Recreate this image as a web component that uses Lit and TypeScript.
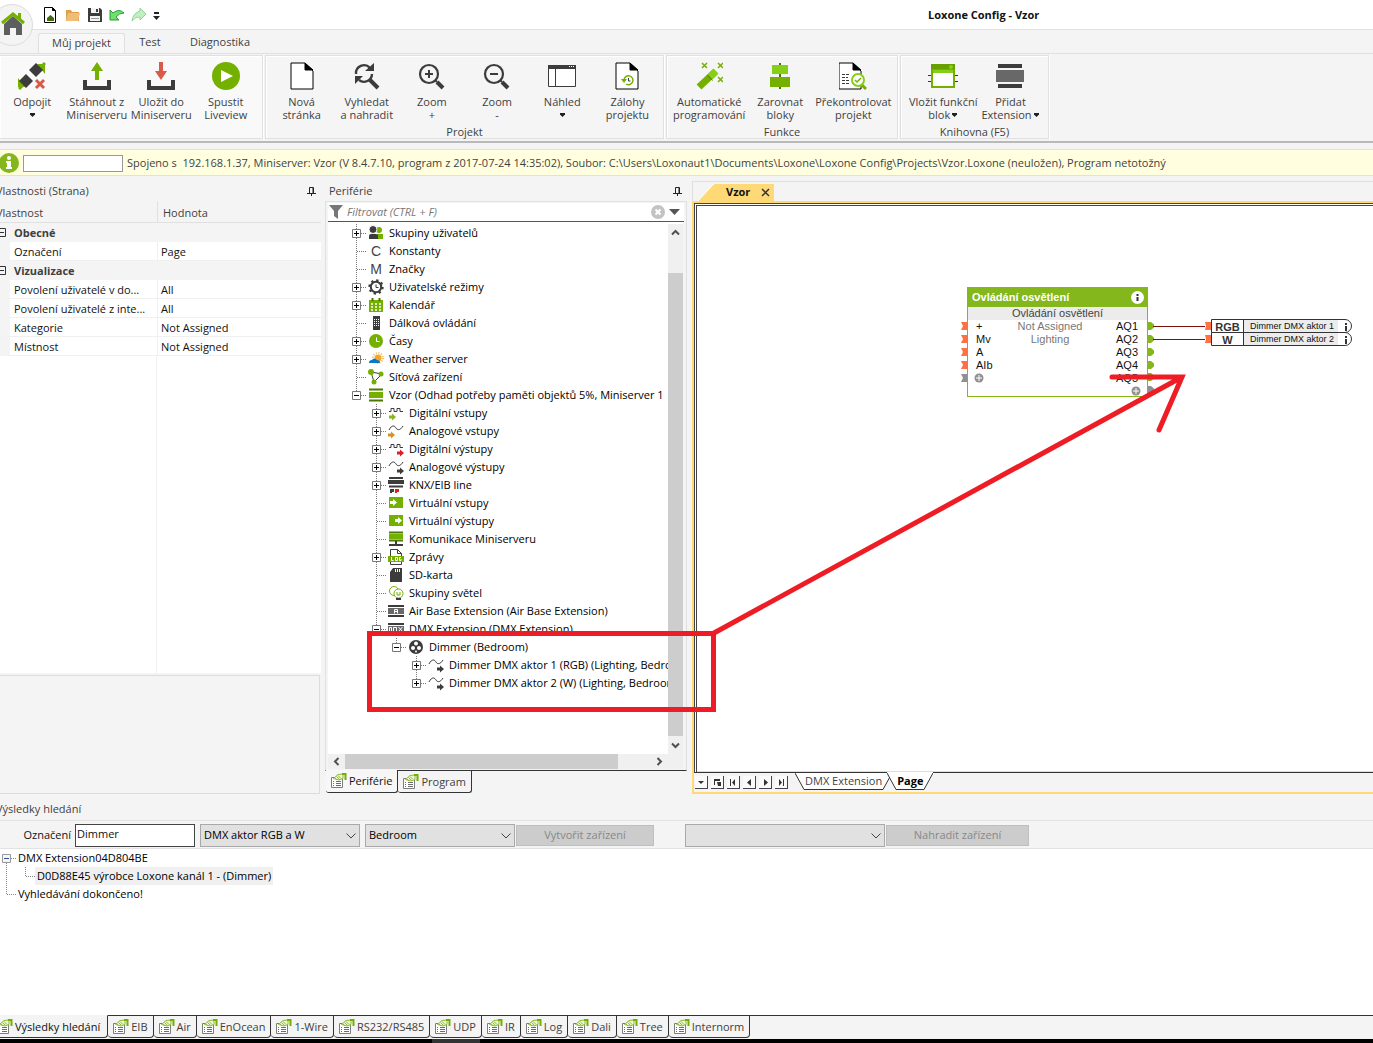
import { LitElement, html, svg, css, nothing, TemplateResult } from "lit";
import { customElement } from "lit/decorators.js";
import { classMap } from "lit/directives/class-map.js";

const DARK = "#3c3c3c";
const GREEN = "#74b000";
const LIME = "#85d016";

const icon = (w: number, h: number, body: unknown) =>
  html`<svg width=${w} height=${h} viewBox="0 0 ${w} ${h}" fill="none" aria-hidden="true">${body}</svg>`;

const sheet = svg`<path d="M1 1h14l8 8v18h-22z" transform="translate(2 0)" fill="#fff" stroke="#000"/><path d="M17 1v7h8z" fill="#000" stroke="#000"/>`;
const lens = svg`<circle cx="11" cy="12" r="9" stroke="${DARK}" stroke-width="2.2"/><path d="M17 18l2 2" stroke="${DARK}" stroke-width="2"/><path d="M19 20l6 6" stroke="${DARK}" stroke-width="4"/>`;

const big: Record<string, TemplateResult> = {
  unplug: icon(28, 28, svg`<path d="M1 27l5-5M22 6l5-5" stroke="${GREEN}" stroke-width="3"/><path d="M0 16v9l7 0zM27 12V2h-8z" fill="${GREEN}"/><path d="M12 8l7-7 7 7-7 7z" fill="${DARK}" transform="translate(-1 0)"/><path d="M1 19l7-7 7 7-7 7z" fill="${DARK}"/><path d="M8 10l-2-2M13 22l2 2" stroke="#fff"/><path d="M18 18l8 8m0-8l-8 8" stroke="#da5a49" stroke-width="3"/>`),
  download: icon(28, 28, svg`<path d="M2 18v8h24v-8" stroke="${DARK}" stroke-width="4"/><path d="M14 0l6 9h-4v9h-4V9H8z" fill="${GREEN}"/>`),
  upload: icon(28, 28, svg`<path d="M2 18v8h24v-8" stroke="${DARK}" stroke-width="4"/><path d="M14 18l6-9h-4V0h-4v9H8z" fill="#da5a49"/>`),
  play: icon(28, 28, svg`<circle cx="14" cy="14" r="14" fill="${GREEN}"/><path d="M9 8l12 6-12 6z" fill="#fff"/>`),
  page: icon(28, 28, sheet),
  replace: icon(28, 28, svg`<path d="M3 12a8 8 0 0 1 14-6M19 12a8 8 0 0 1-13 6" stroke="${DARK}" stroke-width="2.4"/><path d="M12 9h9V1zM2 14h8l-8 8z" fill="${DARK}"/><path d="M16 17l9 9" stroke="${DARK}" stroke-width="4"/>`),
  zoomIn: icon(28, 28, svg`${lens}<path d="M7 12h8M11 8v8" stroke="${DARK}" stroke-width="2"/>`),
  zoomOut: icon(28, 28, svg`${lens}<path d="M7 12h8" stroke="${DARK}" stroke-width="2"/>`),
  view: icon(28, 28, svg`<path d="M.5 3.500h27v21H.5z" fill="#fff" stroke="${DARK}"/><path d="M0 3h28v4H0z" fill="${DARK}"/><path d="M7.500 7v17" stroke="${DARK}"/><path d="M21 4.500h6" stroke="#fff" stroke-dasharray="1 1"/>`),
  backup: icon(28, 28, svg`${sheet}<path d="M11 18a4.500 4.500 0 1 1 2 4" stroke="${GREEN}" stroke-width="1.500"/><path d="M8 17h6l-3 4z" fill="${GREEN}"/><path d="M15.500 16v3h2" stroke="${DARK}"/>`),
  wand: icon(28, 28, svg`<path d="M4 25L20 10" stroke="${GREEN}" stroke-width="7"/><path d="M15 15l6-6" stroke="${LIME}" stroke-width="7"/><path d="M12.500 13l5 5.500" stroke="#4d7800"/><path d="M7 1l5 5m0-5L7 6M23 1l5 5m0-5l-5 5M23 15l5 5m0-5l-5 5" stroke="${GREEN}" stroke-width="1.500"/>`),
  align: icon(28, 28, svg`<path d="M14 1v26" stroke="#4d7800" stroke-width="2"/><path d="M6 3h16v9H6z" fill="${LIME}"/><path d="M4 15h20v10H4z" fill="${GREEN}"/>`),
  check: icon(28, 28, svg`<g transform="translate(-3 0)">${sheet}</g><path d="M3 12.500h8M3 15.500h6M3 18.500h7M3 21.500h8" stroke="${DARK}" stroke-dasharray="3 1"/><path d="M23 23l4 4" stroke="${GREEN}" stroke-width="3"/><circle cx="19" cy="18" r="6" fill="#fff" stroke="${LIME}" stroke-width="2"/><path d="M16 18l2 2 4-4" stroke="${GREEN}" stroke-width="1.500"/>`),
  block: icon(30, 28, svg`<path d="M0 13.500h30M0 19.500h30" stroke="#2c4400"/><path d="M3 2h24v24H3z" fill="${GREEN}"/><path d="M3 2h24v5H3z" fill="#67a000"/><path d="M5 8h20v3H5z" fill="${LIME}"/><path d="M5 11h20v13H5z" fill="#fff"/><circle cx="23" cy="5" r="2" fill="${LIME}"/>`),
  extension: icon(28, 28, svg`<path d="M2 2h24v4H2zM2 22h24v4H2z" fill="${DARK}"/><path d="M0 8h28v12H0z" fill="#686868"/>`),
};

const sq = "M1 4.500h2v-3h3v3h3v-3h3v3h3";
const wave = "M1 6c3-6 6-4 7-2s4 3 7-2";
const arrow = (x: number, y: number, c: string) => svg`<path d="M${x} ${y - 1.500}h3v-2l4 3.500-4 3.500v-2h-3z" fill="${c}"/>`;
const rails = svg`<path d="M0 3h16M0 13h16" stroke="${DARK}" stroke-width="2"/><path d="M0 5h16v6H0z" fill="#686868"/>`;
const small: Record<string, TemplateResult> = {
  users: icon(16, 16, svg`<circle cx="11" cy="5" r="3" fill="${GREEN}"/><path d="M9 9h6v5H9z" fill="${GREEN}"/><circle cx="5" cy="4.500" r="4" fill="${DARK}" stroke="#fff"/><path d="M1 14v-3q0-2 2-2h5q2 0 2 2v3z" fill="${DARK}"/>`),
  gear: icon(16, 16, svg`<circle cx="8" cy="8" r="5.200" stroke="${DARK}" stroke-width="2"/><circle cx="8" cy="8" r="6.700" stroke="${DARK}" stroke-width="2" stroke-dasharray="2.300 2.960"/><path d="M8 5.500V8.500h2.500" stroke="${DARK}"/>`),
  calendar: icon(16, 16, svg`<path d="M1 3h14v12H1z" fill="${GREEN}"/><path d="M4.500 1v3M11.500 1v3" stroke="#4d7800" stroke-width="2"/><path d="M3 7h10M3 10h10M3 13h10" stroke="#fff" stroke-width="1.500" stroke-dasharray="2 2"/>`),
  remote: icon(16, 16, svg`<path d="M5 1h7v14H5z" fill="${DARK}"/><path d="M6 4.500h5M6 6.500h5M6 8.500h5M6 10.500h5" stroke="#fff" stroke-dasharray="1 1"/>`),
  clock: icon(16, 16, svg`<circle cx="8" cy="8" r="7" fill="${GREEN}"/><path d="M8.500 4.500v4h3" stroke="#fff"/>`),
  weather: icon(16, 16, svg`<circle cx="10" cy="7" r="5" stroke="#f5b84a" stroke-width="2" stroke-dasharray="1 1.600"/><circle cx="10" cy="7" r="3.500" fill="#f5a623"/><path d="M1 12q0-3 3-3 2-3 5 0 3 0 3 3z" fill="#0a76c8"/>`),
  network: icon(16, 16, svg`<path d="M3 3l3 10M6 13l8-8M3 3l11 2" stroke="${DARK}"/><circle cx="3" cy="3" r="3" fill="${GREEN}"/><circle cx="13" cy="5" r="2.500" fill="${GREEN}"/><circle cx="6" cy="13" r="2.500" fill="${GREEN}"/>`),
  server: icon(16, 16, svg`<path d="M1 2.500h14M1 13.500h14" stroke="#4d7800" stroke-width="2"/><path d="M1 5h14v6H1z" fill="${GREEN}"/>`),
  digIn: icon(16, 16, svg`<path d="${sq}" transform="translate(0 2)" stroke="${DARK}"/>${arrow(1, 12, "#85b81a")}`),
  anaIn: icon(16, 16, svg`<path d="${wave}" transform="translate(0 1)" stroke="${DARK}"/>${arrow(0, 12, "#d8931c")}`),
  digOut: icon(16, 16, svg`<path d="${sq}" transform="translate(0 2)" stroke="${DARK}"/>${arrow(9, 12, "#da1f1f")}`),
  anaOut: icon(16, 16, svg`<path d="${wave}" transform="translate(0 1)" stroke="${DARK}"/>${arrow(9, 12, DARK)}`),
  knx: icon(16, 16, svg`<path d="M1 1h14M1 9.500h14" stroke="${DARK}" stroke-width="2"/><path d="M0 3h16v4H0z" fill="${DARK}"/><path d="M2 12h4v3h-2v1H2z" fill="${DARK}"/><path d="M7 12h4v3H9v1H7z" fill="#da1f1f"/>`),
  virIn: icon(16, 16, svg`<path d="M1 2h14v11H1z" fill="${GREEN}"/>${arrow(2, 7.500, "#fff")}`),
  virOut: icon(16, 16, svg`<path d="M1 2h14v11H1z" fill="${GREEN}"/>${arrow(7, 7.500, "#fff")}`),
  comm: icon(16, 16, svg`<path d="M1 1.500h14M1 9.500h14" stroke="#4d7800" stroke-width="2"/><path d="M1 3h14v5H1z" fill="${GREEN}"/><path d="M8 10v4M1 14h14" stroke="${DARK}" stroke-width="2"/>`),
  log: icon(16, 16, svg`<path d="M2.500.5h7l4 4v11h-11z" fill="#fff" stroke="${DARK}"/><path d="M9.500.5v4h4" stroke="${DARK}"/><path d="M0 7h16v6H0z" fill="${GREEN}"/><path d="M3.500 8v3.500h2M7.500 8.500h2v3h-2zM13 8.500h-1.500v3H13v-1.500" stroke="#fff"/>`),
  sd: icon(16, 16, svg`<path d="M2 5l3-4h9v14H2z" fill="${DARK}"/><path d="M7.500 2v3M9.500 2v3M11.500 2v3" stroke="#fff"/>`),
  lights: icon(16, 16, svg`<circle cx="6" cy="6" r="4.500" stroke="${GREEN}"/><circle cx="10.500" cy="8.500" r="4.500" fill="#fff" stroke="${GREEN}"/><path d="M9 7v3h3V7" stroke="${GREEN}"/><path d="M8 14h5" stroke="${DARK}" stroke-width="2"/>`),
  air: icon(16, 16, svg`${rails}<path d="M6.500 10.500v-4h3v4M6.500 8.500h3" stroke="#fff"/>`),
  dmx: icon(16, 16, svg`${rails}<path d="M1.500 6.500h2v4h-2zM5.500 10v-3.500h3V10M10.500 6l4 4.500m0-4.500l-4 4.500" stroke="#fff"/>`),
  dmxDevice: icon(16, 16, svg`<circle cx="8" cy="8" r="7" fill="${DARK}"/><circle cx="8" cy="4.500" r="2" fill="#fff"/><circle cx="5" cy="9" r="2" fill="#fff"/><circle cx="11" cy="9" r="2" fill="#fff"/><circle cx="8" cy="12.500" r="1" fill="#fff"/>`),
};
const paneIcon = icon(17, 16, svg`<path d="M1.500 4.500h11v10h-11z" fill="#fff" stroke="#7d7d7d"/><path d="M3 8.500h1M6 8.500h5M3 10.500h1M6 10.500h5M3 12.500h1M6 12.500h5" stroke="#6c6c6c"/><path d="M3.500 5.500L8 1.500l5-.5v4.500l-4 1.500z" fill="#eef6d6" stroke="#8dbb3a"/><path d="M5 5l2 2M6.500 3.500l3 3M8 2.500l3 3" stroke="#8dbb3a"/><path d="M12 1h3.500v6" stroke="${GREEN}" stroke-width="2"/>`);
const pin = icon(9, 9, svg`<path d="M2.500 6V.5h4V6M0 6.500h9M4.500 6.500V9" stroke="#222"/><path d="M6 1v5" stroke="#222"/>`);
const chevron = (d: string) => icon(9, 9, svg`<path d="${d}" stroke="#505050" stroke-width="2"/>`);
const caret = icon(7, 4, svg`<path d="M1 0h5v1.500L3.500 4 1 1.500z" fill="#222"/>`);

interface Tool { icon: string; lines: string[]; menu?: "below" | "inline" }
interface Group { label: string; kind: string; tools: Tool[] }
const GROUPS: Group[] = [
  { label: "", kind: "g-main", tools: [
    { icon: "unplug", lines: ["Odpojit"], menu: "below" },
    { icon: "download", lines: ["Stáhnout z", "Miniserveru"] },
    { icon: "upload", lines: ["Uložit do", "Miniserveru"] },
    { icon: "play", lines: ["Spustit", "Liveview"] } ] },
  { label: "Projekt", kind: "g-project", tools: [
    { icon: "page", lines: ["Nová", "stránka"] },
    { icon: "replace", lines: ["Vyhledat", "a nahradit"] },
    { icon: "zoomIn", lines: ["Zoom", "+"] },
    { icon: "zoomOut", lines: ["Zoom", "-"] },
    { icon: "view", lines: ["Náhled"], menu: "below" },
    { icon: "backup", lines: ["Zálohy", "projektu"] } ] },
  { label: "Funkce", kind: "g-func", tools: [
    { icon: "wand", lines: ["Automatické", "programování"] },
    { icon: "align", lines: ["Zarovnat", "bloky"] },
    { icon: "check", lines: ["Překontrolovat", "projekt"] } ] },
  { label: "Knihovna (F5)", kind: "g-lib", tools: [
    { icon: "block", lines: ["Vložit funkční", "blok"], menu: "inline" },
    { icon: "extension", lines: ["Přidat", "Extension"], menu: "inline" } ] },
];

interface Node { level: number; mark?: "+" | "-"; icon?: string; letter?: string; label: string; last?: boolean }
const NODES: Node[] = [
  { level: 0, mark: "+", icon: "users", label: "Skupiny uživatelů" },
  { level: 0, letter: "C", label: "Konstanty" },
  { level: 0, letter: "M", label: "Značky" },
  { level: 0, mark: "+", icon: "gear", label: "Uživatelské režimy" },
  { level: 0, mark: "+", icon: "calendar", label: "Kalendář" },
  { level: 0, icon: "remote", label: "Dálková ovládání" },
  { level: 0, mark: "+", icon: "clock", label: "Časy" },
  { level: 0, mark: "+", icon: "weather", label: "Weather server" },
  { level: 0, icon: "network", label: "Síťová zařízení" },
  { level: 0, mark: "-", icon: "server", label: "Vzor (Odhad potřeby paměti objektů 5%, Miniserver 1", last: true },
  { level: 1, mark: "+", icon: "digIn", label: "Digitální vstupy" },
  { level: 1, mark: "+", icon: "anaIn", label: "Analogové vstupy" },
  { level: 1, mark: "+", icon: "digOut", label: "Digitální výstupy" },
  { level: 1, mark: "+", icon: "anaOut", label: "Analogové výstupy" },
  { level: 1, mark: "+", icon: "knx", label: "KNX/EIB line" },
  { level: 1, icon: "virIn", label: "Virtuální vstupy" },
  { level: 1, icon: "virOut", label: "Virtuální výstupy" },
  { level: 1, icon: "comm", label: "Komunikace Miniserveru" },
  { level: 1, mark: "+", icon: "log", label: "Zprávy" },
  { level: 1, icon: "sd", label: "SD-karta" },
  { level: 1, icon: "lights", label: "Skupiny světel" },
  { level: 1, icon: "air", label: "Air Base Extension (Air Base Extension)" },
  { level: 1, mark: "-", icon: "dmx", label: "DMX Extension (DMX Extension)", last: true },
  { level: 2, mark: "-", icon: "dmxDevice", label: "Dimmer (Bedroom)", last: true },
  { level: 3, mark: "+", icon: "anaOut", label: "Dimmer DMX aktor 1 (RGB) (Lighting, Bedroom)" },
  { level: 3, mark: "+", icon: "anaOut", label: "Dimmer DMX aktor 2 (W) (Lighting, Bedroom)", last: true },
];

const shared = css`
  * { box-sizing: border-box; }
  button, input, select { font: inherit; color: inherit; margin: 0; padding: 0; border: 0; background: none; border-radius: 0; }
  svg { display: block; flex: none; }
`;

@customElement("lx-ribbon")
export class LxRibbon extends LitElement {
  static styles = [shared, css`
    :host { display: block; color: #3f3f3f; }
    .quick { display: flex; align-items: center; height: 29px; padding-left: 43px; background: #fff; }
    .quick button { width: 16px; height: 16px; margin-right: 6px; }
    .caption { flex: 1; padding-left: 753px; font-weight: 700; color: #111; white-space: nowrap; }
    .tabs { display: flex; height: 24px; padding: 3px 0 0 38px; border-top: 1px solid #e2e2e2; background: #f4f4f4; }
    .tabs button { width: 70px; height: 20px; padding-bottom: 2px; }
    .tabs .active { width: 87px; border: 1px solid #e0e0e0; border-bottom: 0; border-radius: 3px 3px 0 0; background: #f8f8f8; }
    .tabs .test { width: 50px; }
    .tabs .diag { width: 90px; }
    .tools { display: flex; gap: 2px; height: 90px; padding: 1px 0 2px; border-top: 1px solid #e0e0e0; border-bottom: 2px solid #b9b9b9; background: #f4f4f4; }
    .group { display: grid; grid-template-rows: 1fr 12px; border: 1px solid #e0e0e0; box-shadow: inset 1px 1px #fff, 1px 0 #fff; background: #f5f5f5; }
    .g-main { width: 263px; border-left: 0; background: #f9f9f9; padding-right: 4px; }
    .g-project { width: 399px; padding: 0 3px; }
    .g-func { width: 232px; }
    .g-lib { width: 149px; }
    .items { display: flex; }
    .g-func .items { gap: 12px; padding-left: 6px; }
    .g-lib .items { gap: 4px; padding-left: 8px; }
    .tool { flex: 1 1 0; min-width: 0; display: flex; flex-direction: column; align-items: center; padding-top: 6px; line-height: 13px; white-space: nowrap; }
    .g-func .tool, .g-lib .tool { flex: none; }
    .tool > svg { margin-bottom: 5px; }
    .line { display: flex; align-items: center; gap: 1px; height: 13px; }
    .label { text-align: center; line-height: 12px; }
    .home { position: absolute; left: -10px; top: 3px; width: 44px; height: 44px; }
  `];

  render() {
    return html`
      <div class="quick">
        <button aria-label="Nový projekt">${icon(16, 16, svg`<path d="M1.500.5h8l3 3v12h-11z" fill="#fff" stroke="#000"/><path d="M9.500.5v3h3" fill="#000" stroke="#000"/><path d="M4 11l3.500-3 3.500 3v3H4z" fill="#3f6b0a"/>`)}</button>
        <button aria-label="Otevřít">${icon(16, 16, svg`<path d="M1 3h5l1 2h7v9H1z" fill="#dda04e"/><path d="M3 6h12l-2 8H1z" fill="#f0bd75"/>`)}</button>
        <button aria-label="Uložit">${icon(16, 16, svg`<path d="M1 1h12l2 2v12H1z" fill="${DARK}"/><path d="M4 1h8v5H4zM3 9h10v5H3z" fill="#f4f4f4"/><path d="M9 2h2v3H9z" fill="${DARK}"/><path d="M4 11.500h8" stroke="#999"/>`)}</button>
        <button aria-label="Zpět">${icon(16, 16, svg`<path d="M1 3v10l9 0-3-3q3-4 8-4-5-5-11 0z" fill="#6fe06d" stroke="#2a9a3b"/>`)}</button>
        <button aria-label="Znovu">${icon(16, 16, svg`<path d="M15 7L9 1v3Q2 6 1 14q4-5 8-4v3z" fill="#c0efc2" stroke="#94d69a"/>`)}</button>
        <button aria-label="Přizpůsobit">${icon(7, 14, svg`<path d="M1 5h5" stroke="#222" stroke-width="2"/><path d="M0 8h7l-3.500 4z" fill="#222"/>`)}</button>
        <div class="caption">Loxone Config - Vzor</div>
      </div>
      <div class="tabs">
        <button class="active">Můj projekt</button><button class="test">Test</button><button class="diag">Diagnostika</button>
      </div>
      <div class="tools">
        ${GROUPS.map((g) => html`<div class="group ${g.kind}">
          <div class="items">${g.tools.map((t) => html`<button class="tool">${big[t.icon]}
            ${t.lines.map((l, i) => html`<span class="line">${l}${t.menu === "inline" && i === 1 ? caret : nothing}</span>`)}
            ${t.menu === "below" ? html`<span class="line">${caret}</span>` : nothing}</button>`)}</div>
          <div class="label">${g.label}</div>
        </div>`)}
      </div>
      <button class="home" aria-label="Domů">${icon(44, 44, svg`<circle cx="22" cy="22" r="20.500" fill="#f4f4f4" stroke="#dcdcdc"/><path d="M14 21l9-8 9 8v11h-6v-7h-6v7h-6z" fill="#5d5e60"/><path d="M12 20L23 11l11 9" stroke="${GREEN}" stroke-width="3"/><path d="M28 10h3v7l-3-3z" fill="${GREEN}"/>`)}</button>`;
  }
}

@customElement("lx-properties")
export class LxProperties extends LitElement {
  static styles = [shared, css`
    :host { display: flex; flex-direction: column; width: 321px; overflow: hidden; color: #3f3f3f; }
    .head { display: flex; justify-content: space-between; align-items: center; height: 25px; padding: 5px 5px 0 0; }
    .title { margin-left: -4px; }
    .grid { flex: 1; display: flex; flex-direction: column; background: #fff; }
    table { width: 100%; border-collapse: separate; border-spacing: 0; table-layout: fixed; }
    th { height: 22px; padding: 2px 0 0 5px; text-align: left; font-weight: 400; background: #f4f4f4; border-bottom: 1px solid #e0e0e0; border-left: 1px solid #e0e0e0; }
    th:first-child { width: 157px; padding: 2px 0 0; border-left: 0; }
    th:first-child span { margin-left: -4px; }
    td { height: 19px; padding: 1px 0 0 3px; color: #111; border-bottom: 1px solid #f0f0f0; border-left: 1px solid #f0f0f0; line-height: 16px; }
    td:first-child { padding-left: 4px; border-left: 10px solid #f4f4f4; white-space: nowrap; overflow: hidden; text-overflow: ellipsis; }
    .cat td:first-child { padding: 0; border: 0; background: #f4f4f4; font-weight: 700; color: #3f3f3f; }
    .cat span { display: flex; align-items: center; gap: 8px; }
    .toggle { width: 9px; height: 9px; margin-left: -3px; }
    .rest { flex: 1; width: 157px; border-right: 1px solid #f0f0f0; }
    .desc { height: 119px; margin: 2px 1px 2px 0; border: 1px solid #dcdcdc; border-left: 0; }
  `];

  private category(name: string) {
    return html`<tr class="cat"><td colspan="2"><span><button class="toggle" aria-label="Sbalit ${name}">${icon(9, 9, svg`<path d="M.5.5h8v8h-8zM2 4.500h5" stroke="#333"/>`)}</button>${name}</span></td></tr>`;
  }
  private row(name: string, value: string) {
    return html`<tr><td>${name}</td><td>${value}</td></tr>`;
  }
  render() {
    return html`
      <div class="head"><span class="title">Vlastnosti (Strana)</span>${pin}</div>
      <div class="grid">
        <table>
          <thead><tr><th><span>Vlastnost</span></th><th>Hodnota</th></tr></thead>
          <tbody>
            ${this.category("Obecné")}
            ${this.row("Označení", "Page")}
            ${this.category("Vizualizace")}
            ${this.row("Povolení uživatelé v do...", "All")}
            ${this.row("Povolení uživatelé z inte...", "All")}
            ${this.row("Kategorie", "Not Assigned")}
            ${this.row("Místnost", "Not Assigned")}
          </tbody>
        </table>
        <div class="rest"></div>
      </div>
      <div class="desc"></div>`;
  }
}

@customElement("lx-periphery")
export class LxPeriphery extends LitElement {
  static styles = [shared, css`
    :host { display: flex; flex-direction: column; width: 362px; color: #3f3f3f; }
    .head { display: flex; justify-content: space-between; align-items: center; height: 25px; padding: 5px 5px 0 4px; }
    .box { flex: 1; min-height: 0; display: flex; flex-direction: column; padding: 1px 2px 1px 2px; border: 1px solid #e0e0e0; border-bottom: 1px solid #333; }
    .filter { display: flex; align-items: center; height: 19px; padding: 0 4px 0 1px; gap: 4px; background: #fff; border-bottom: 1px solid #555; }
    .filter input { flex: 1; min-width: 0; font-style: italic; outline: 0; }
    .filter input::placeholder { color: #777; opacity: 1; }
    .view { flex: 1; min-height: 0; display: grid; grid-template-columns: 1fr 15px; grid-template-rows: 1fr 15px; margin-right: 1px; padding-top: 2px; background: #fff; }
    .tree { margin: 0; padding: 0; list-style: none; overflow: hidden; color: #000; }
    .node { display: flex; align-items: center; height: 18px; white-space: nowrap; }
    .l0 { padding-left: 18px; } .l1 { padding-left: 38px; } .l2 { padding-left: 58px; } .l3 { padding-left: 78px; }
    .branch { flex: none; display: grid; place-items: center; width: 21px; height: 18px; margin-right: 1px;
      background: repeating-linear-gradient(#777 0 1px, transparent 1px 2px) 10px 0 / 1px 18px no-repeat,
        repeating-linear-gradient(90deg, #777 0 1px, transparent 1px 2px) 11px 9px / 10px 1px no-repeat; }
    .branch.last { background: repeating-linear-gradient(#777 0 1px, transparent 1px 2px) 10px 0 / 1px 9px no-repeat,
        repeating-linear-gradient(90deg, #777 0 1px, transparent 1px 2px) 11px 9px / 10px 1px no-repeat; }
    .mark { width: 9px; height: 9px; background: #fff; }
    .letter { width: 16px; text-align: center; font: 14px/18px "Liberation Sans", sans-serif; color: #444; }
    .text { margin-left: 5px; }
    .bar { display: flex; background: #f0f0f0; justify-content: space-between; align-items: center; }
    .v { flex-direction: column; padding: 4px 0; }
    .v i { width: 15px; flex: 463; margin-top: 36px; margin-bottom: 5px; background: #cdcdcd; }
    .h { padding: 0 4px; }
    .h i { height: 15px; flex: 273; margin-left: 4px; margin-right: 37px; background: #cdcdcd; }
    .corner { background: #f0f0f0; }
    .tabs { display: flex; height: 25px; padding-left: 1px; }
    .tab { display: flex; align-items: center; gap: 2px; height: 22px; padding: 0 5px 0 4px; border-right: 1px solid #333; border-bottom: 1px solid #333; border-radius: 0 0 3px 3px; }
    .on { color: #111; margin-top: -1px; height: 23px; background: #f7f7f7; }
  `];

  render() {
    return html`
      <div class="head"><span>Periférie</span>${pin}</div>
      <div class="box">
        <div class="filter">
          ${icon(14, 14, svg`<path d="M0 0h14L9 6v8l-4-3V6z" fill="#777"/>`)}
          <input aria-label="Filtrovat" placeholder="Filtrovat (CTRL + F)">
          <button aria-label="Vymazat filtr">${icon(14, 14, svg`<circle cx="7" cy="7" r="7" fill="#c3c3c3"/><path d="M4.500 4.500l5 5m0-5l-5 5" stroke="#fff" stroke-width="2"/>`)}</button>
          <button aria-label="Možnosti filtru">${icon(11, 6, svg`<path d="M0 0h11L5.500 6z" fill="#555"/>`)}</button>
        </div>
        <div class="view">
          <ul class="tree">${NODES.map((n) => html`<li class="node l${n.level}">
            <span class=${classMap({ branch: true, last: !!n.last })}>${n.mark ? html`<button class="mark" aria-label="Rozbalit ${n.label}">${icon(9, 9, svg`<path d="M.5.5h8v8h-8z" stroke="#777"/><path d="${n.mark === "+" ? "M2 4.500h5M4.500 2v5" : "M2 4.500h5"}" stroke="#000"/>`)}</button>` : nothing}</span>
            ${n.letter ? html`<span class="letter">${n.letter}</span>` : small[n.icon!]}
            <span class="text">${n.label}</span></li>`)}</ul>
          <div class="bar v">${chevron("M1 6.500L4.500 3 8 6.500")}<i></i>${chevron("M1 2.500L4.500 6 8 2.500")}</div>
          <div class="bar h">${chevron("M6.500 1L3 4.500 6.500 8")}<i></i>${chevron("M2.500 1L6 4.500 2.500 8")}</div>
          <div class="corner"></div>
        </div>
      </div>
      <div class="tabs"><button class="tab on">${paneIcon}Periférie</button><button class="tab">${paneIcon}Program</button></div>`;
  }
}

@customElement("lx-editor")
export class LxEditor extends LitElement {
  static styles = [shared, css`
    :host { display: flex; flex-direction: column; min-width: 0; padding-top: 5px; color: #3f3f3f; }
    .docs { display: flex; height: 20px; border: 1px solid #e0e0e0; border-bottom: 0; border-right: 0; }
    .doc { display: flex; align-items: center; margin: 2px 0 0 4px; }
    .doc span { display: flex; align-items: center; gap: 11px; height: 18px; padding: 0 4px 2px 11px; background: #ffd976; font-weight: 700; color: #111; }
    .doc button { padding-top: 2px; }
    .frame { flex: 1; min-height: 0; display: flex; flex-direction: column; border: solid #ffd976; border-width: 2px 0 2px 2px; margin-bottom: 2px; }
    .canvas { position: relative; flex: 1; overflow: hidden; background: #fff; border: double #444; border-width: 3px 0 0 3px; box-shadow: inset 0 -1px #ddd; font: 11px/13px "Liberation Sans", Arial, sans-serif; color: #111; }
    .wires { position: absolute; left: 0; top: 0; }
    .block { position: absolute; left: 270px; top: 81px; width: 181px; height: 110px; border: 1px solid #84b71b; background: #fff; }
    .name { display: flex; align-items: center; justify-content: space-between; height: 19px; padding: 0 3px 0 4px; background: #84b71b; color: #fff; font-weight: 700; }
    .sub { height: 13px; text-align: center; background: #ececec; color: #444; }
    .pins { display: grid; grid-template-columns: 30px 1fr 44px; padding: 0 9px 0 8px; }
    .pins span { height: 13px; white-space: nowrap; }
    .mid { text-align: center; color: #777; }
    .out { text-align: right; }
    .plus { padding-top: 1px; margin-left: -2px; }
    .plus.right { display: flex; justify-content: flex-end; margin-right: -3px; }
    .actor { position: absolute; left: 514px; display: grid; grid-template-columns: 32px 94px 15px; width: 141px; height: 14px; border: 1px solid #333; border-radius: 0 7px 7px 0; background: #fff; font-size: 9px; line-height: 12px; overflow: hidden; }
    .a1 { top: 113px; } .a2 { top: 126px; }
    .actor b { font-size: 11px; line-height: 14px; text-align: center; border-right: 1px solid #333; color: #333; }
    .actor span { padding-left: 6px; background: #ececec; white-space: nowrap; }
    .actor i { display: grid; place-items: center; }
    .sheets { display: flex; height: 20px; line-height: 16px; }
    .nav { display: flex; gap: 3px; padding: 3px 7px 0 1px; border-top: 1px solid #333; }
    .nav button { display: grid; place-items: center; width: 13px; height: 13px; border: solid #444; border-width: 0 1px 1px 0; background: #fafafa; }
    .sheet { display: flex; height: 18px; }
    .sheet span { padding: 0 1px; height: 17px; background: #fff; border-bottom: 1px solid #333; white-space: nowrap; }
    .sheet.back { border-top: 1px solid #333; }
    .sheet.front { font-weight: 700; color: #000; margin-left: -5px; padding-top: 1px; background: linear-gradient(#fff, #fff) 0 0 / 100% 1px no-repeat; }
    .fill { flex: 1; border-top: 1px solid #333; }
  `];

  render() {
    const plus = icon(10, 10, svg`<circle cx="5" cy="5" r="4.500" fill="#909090"/><path d="M5 2v6M2 5h6" stroke="#fff"/>`);
    const slantL = icon(9, 17, svg`<path d="M0 0l9 16.500V0z" fill="#fff"/><path d="M0 0l9 16.500" stroke="#333"/>`);
    const slantR = icon(9, 17, svg`<path d="M9 0L0 16.500V0z" fill="#fff"/><path d="M9 0L0 16.500" stroke="#333"/>`);
    const nav = ["M1 3h6L4 6z", "M1 1h6v2H2v4H1zM4 4h4v4H5z", "M1 1h1v7H1zM6 1v7L3 4.500z", "M6 1v7L2 4.500z", "M3 1v7l4-3.500z", "M2 1v7l3-3.500zM6 1h1v7H6z"];
    const navNames = ["Seznam stránek", "Přejít", "První", "Předchozí", "Další", "Poslední"];
    const left = ["+", "Mv", "A", "AIb"];
    const mid = ["Not Assigned", "Lighting", "", "", ""];
    return html`
      <div class="docs"><div class="doc">${icon(18, 18, svg`<path d="M0 18L16 1l2-1v18z" fill="#ffd976"/><path d="M0 18L16 .5" stroke="#fff"/>`)}<span>Vzor <button aria-label="Zavřít">${icon(9, 9, svg`<path d="M1 1l7 7m0-7L1 8" stroke="#333" stroke-width="1.500"/>`)}</button></span></div></div>
      <div class="frame">
        <div class="canvas">
          <svg class="wires" width="670" height="200" fill="none">
            ${[120, 133, 146, 159].map((y) => svg`<path d="M264 ${y - 4}h7v8h-7l2-4z" fill="#ff7142"/>`)}
            <path d="M264 168h7v8h-7l2-4z" fill="#909090"/>
            ${[120, 133, 146, 159, 171].map((y) => svg`<path d="M451 ${y - 4}h3l3 2.500v3l-3 2.500h-3z" fill="#84b71b"/>`)}
            <path d="M451 180h3l3 2.500v3l-3 2.500h-3z" fill="#909090"/>
            <path d="M456 120.500h52M456 133.500h52" stroke="#7c0f0f"/>
            ${[120, 133].map((y) => svg`<path d="M508 ${y - 4}h6v8h-6l1-4z" fill="#ff7142"/>`)}
          </svg>
          <div class="block">
            <div class="name">Ovládání osvětlení ${icon(13, 13, svg`<circle cx="6.500" cy="6.500" r="6.500" fill="#fff"/><path d="M6.500 3v2M6.500 6v4" stroke="#333" stroke-width="2"/>`)}</div>
            <div class="sub">Ovládání osvětlení</div>
            <div class="pins">
              ${mid.map((m, i) => html`${i < 4 ? html`<span>${left[i]}</span>` : html`<span class="plus">${plus}</span>`}<span class="mid">${m}</span><span class="out">AQ${i + 1}</span>`)}
              <span></span><span></span><span class="plus right">${plus}</span>
            </div>
          </div>
          ${["RGB", "W"].map((t, i) => html`<div class="actor a${i + 1}"><b>${t}</b><span>Dimmer DMX aktor ${i + 1}</span><i>${icon(4, 8, svg`<path d="M2 0v2M2 3v5" stroke="#333" stroke-width="2"/>`)}</i></div>`)}
        </div>
        <div class="sheets">
          <div class="nav">${nav.map((d, i) => html`<button aria-label=${navNames[i]}>${icon(9, 9, svg`<path d="${d}" fill="#333"/>`)}</button>`)}</div>
          <button class="sheet back">${slantL}<span>DMX Extension</span>${slantR}</button>
          <button class="sheet front">${slantL}<span>Page</span>${slantR}</button>
          <div class="fill"></div>
        </div>
      </div>`;
  }
}

@customElement("lx-search")
export class LxSearch extends LitElement {
  static styles = [shared, css`
    :host { display: flex; flex-direction: column; height: 247px; background: #f4f4f4; color: #3f3f3f; overflow: hidden; }
    .title { height: 24px; line-height: 26px; margin-left: -4px; }
    .form { display: flex; align-items: center; height: 29px; padding-top: 1px; border: solid #e2e2e2; border-width: 1px 0; color: #111; }
    .form label { width: 75px; padding-right: 4px; text-align: right; }
    .field { width: 120px; height: 23px; padding: 0 1px 3px 1px; border: 1px solid #444; background: #fff; margin-right: 5px; }
    .combo { position: relative; height: 23px; }
    .combo select { appearance: none; width: 100%; height: 23px; padding: 0 20px 0 3px; border: 1px solid #a9a9a9; background: #e1e1e1; color: #000; opacity: 1; }
    .combo svg { position: absolute; right: 4px; top: 7px; pointer-events: none; }
    .type { width: 160px; margin-right: 5px; }
    .room { width: 150px; margin-right: 1px; }
    .target { width: 200px; margin: 0 1px 0 31px; }
    .act { width: 138px; height: 21px; border: 1px solid #bfbfbf; background: #ccc; color: #888; }
    .wide { width: 143px; }
    .results { flex: 1; margin: 0; padding: 0; list-style: none; background: #fff; color: #000; }
    .results li { display: flex; align-items: center; height: 18px; line-height: 18px; }
    .results span { padding: 0 2px; }
    .results .hit { background: #f0f0f0; }
    .tabs { display: flex; height: 24px; }
    .tab { display: flex; align-items: center; gap: 2px; height: 23px; padding: 0 5px 0 4px; border: solid #333; border-width: 1px 1px 1px 0; border-radius: 0 0 4px 4px; white-space: nowrap; }
    .on { border-top-color: #f4f4f4; color: #111; margin-left: -4px; padding: 0 7px 0 0; }
    .fill { flex: 1; border-top: 1px solid #333; }
    .task { display: flex; height: 4px; padding-left: 432px; background: #000; }
    .task i { width: 48px; background: #333; }
  `];

  render() {
    const down = icon(10, 10, svg`<path d="M.5 2.500L5 7l4.500-4.500" stroke="#444"/>`);
    const tabs = ["EIB", "Air", "EnOcean", "1-Wire", "RS232/RS485", "UDP", "IR", "Log", "Dali", "Tree", "Internorm"];
    return html`
      <div class="title">Výsledky hledání</div>
      <div class="form">
        <label for="name">Označení</label><input id="name" class="field" value="Dimmer">
        <div class="combo type"><select aria-label="Typ"><option>DMX aktor RGB a W</option></select>${down}</div>
        <div class="combo room"><select aria-label="Místnost"><option>Bedroom</option></select>${down}</div>
        <button class="act" disabled>Vytvořit zařízení</button>
        <div class="combo target"><select aria-label="Zařízení" disabled><option></option></select>${down}</div>
        <button class="act wide" disabled>Nahradit zařízení</button>
      </div>
      <ul class="results">
        <li>${icon(16, 18, svg`<path d="M6.500 14v4M11 9.500h5" stroke="#888" stroke-dasharray="1 1"/><path d="M2.500 5.500h8v8h-8z" fill="#f6f6f6" stroke="#999"/><path d="M4 9.500h5" stroke="#2f4fa0"/>`)}<span>DMX Extension04D804BE</span></li>
        <li>${icon(35, 18, svg`<path d="M6.500 0v18M25.500 0v9.500h10" stroke="#888" stroke-dasharray="1 1"/>`)}<span class="hit">D0D88E45 výrobce Loxone kanál 1 - (Dimmer)</span></li>
        <li>${icon(16, 18, svg`<path d="M6.500 0v9.500h10" stroke="#888" stroke-dasharray="1 1"/>`)}<span>Vyhledávání dokončeno!</span></li>
      </ul>
      <div class="tabs"><button class="tab on">${paneIcon}Výsledky hledání</button>${tabs.map((t) => html`<button class="tab">${paneIcon}${t}</button>`)}<div class="fill"></div></div>
      <div class="task"><i></i></div>`;
  }
}

@customElement("app-root")
export class AppRoot extends LitElement {
  static styles = [shared, css`
    :host { position: relative; display: flex; flex-direction: column; min-height: 100vh; overflow: hidden; background: #f4f4f4; font: 11px/16px "Open Sans", "Noto Sans", sans-serif; color: #3f3f3f; }
    .status { display: flex; align-items: center; height: 27px; margin-top: 6px; padding-top: 1px; border: solid #e0e0e0; border-width: 1px 0; background: #ffffdf; white-space: pre; }
    .status svg { margin-left: -1px; }
    .status input { width: 100px; height: 17px; margin: 0 4px; border: 1px solid #999; background: #fff; }
    .work { flex: 1; min-height: 0; display: grid; grid-template-columns: auto auto minmax(0, 1fr); column-gap: 4px; }
    .work lx-editor { margin-left: 1px; }
    .notes { position: absolute; left: 0; top: 0; width: 100%; height: 100%; pointer-events: none; }
  `];

  render() {
    return html`
      <lx-ribbon></lx-ribbon>
      <div class="status">${icon(20, 20, svg`<circle cx="10" cy="10" r="10" fill="#84b71b"/><circle cx="10" cy="5" r="2" fill="#fff"/><path d="M7 8h5v6h1v2H7v-2h1v-4H7z" fill="#fff"/>`)}<input aria-label="Adresa">Spojeno s  192.168.1.37, Miniserver: Vzor (V 8.4.7.10, program z 2017-07-24 14:35:02), Soubor: C:\\Users\\Loxonaut1\\Documents\\Loxone\\Loxone Config\\Projects\\Vzor.Loxone (neuložen), Program netotožný</div>
      <div class="work">
        <lx-properties></lx-properties>
        <lx-periphery></lx-periphery>
        <lx-editor></lx-editor>
      </div>
      <lx-search></lx-search>
      <svg class="notes" fill="none" stroke="#ee1c24" stroke-width="5" stroke-linecap="round" aria-hidden="true">
        <path d="M369.500 633.500h344v76h-344z" stroke-linecap="square"/>
        <path d="M714 633L1182 377M1112 377h70l-23 53"/>
      </svg>`;
  }
}
